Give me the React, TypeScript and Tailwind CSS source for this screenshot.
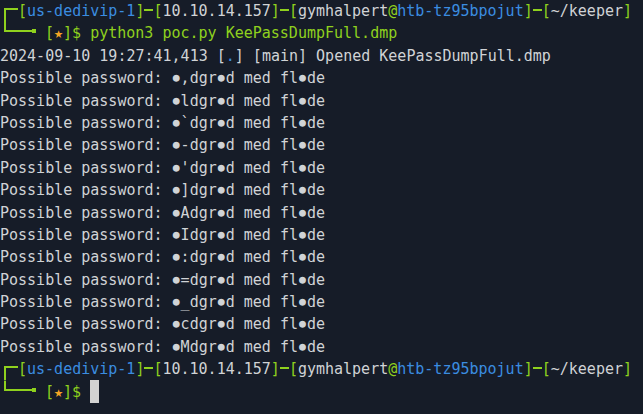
import React from "react";

const G = "text-[#8fd11e]";
const B = "text-[#3b8de0]";
const W = "text-[#d0d3d6]";

const candidates = [",", "l", "`", "-", "'", "]", "A", "I", ":", "=", "_", "c", "M"];

function TopCorner() {
  return (
    <svg width="18" height="22.4" className="shrink-0" viewBox="0 0 18 22.4">
      <rect x="4" y="8" width="2" height="14.4" fill="#8fd11e" />
      <rect x="4" y="8" width="14" height="2" fill="#8fd11e" />
    </svg>
  );
}

function BottomCorner() {
  return (
    <svg width="36" height="22.4" className="shrink-0" viewBox="0 0 36 22.4">
      <rect x="4" y="0" width="2" height="10" fill="#8fd11e" />
      <rect x="4" y="8" width="30" height="2" fill="#8fd11e" />
      <rect x="32" y="7" width="4" height="4" fill="#8fd11e" />
    </svg>
  );
}

function Dash() {
  return <span className="inline-block h-[2px] w-[9px] bg-[#8fd11e] translate-y-[-1px]" />;
}

// masked password char, drawn a bit smaller than the full-size glyph
function Dot() {
  return (
    <span className="inline-block w-[9.03px] -translate-y-[2px] text-center text-[11.5px] leading-none">●</span>
  );
}

function PromptTop() {
  return (
    <div className="flex h-[22.4px] items-center">
      <TopCorner />
      <span className={G}>[</span>
      <span className={B}>us-dedivip-1</span>
      <span className={G}>]</span>
      <Dash />
      <span className={G}>[</span>
      <span className={W}>10.10.14.157</span>
      <span className={G}>]</span>
      <Dash />
      <span className={G}>[</span>
      <span className={W}>gymhalpert</span>
      <span className={G}>@</span>
      <span className={B}>htb-tz95bpojut</span>
      <span className={G}>]</span>
      <Dash />
      <span className={G}>[</span>
      <span className={W}>~/keeper</span>
      <span className={G}>]</span>
    </div>
  );
}

function PromptBottom({ cmd, cursor }: { cmd?: string; cursor?: boolean }) {
  return (
    <div className="flex h-[22.4px] items-center whitespace-pre">
      <BottomCorner />
      <span> </span>
      <span className={G}>[</span>
      <span className="text-[#f5a524]">★</span>
      <span className={G}>]$ </span>
      {cmd && <span className={G}>{cmd}</span>}
      {cursor && <span className="inline-block h-[23px] w-[9px] bg-[#d2d2d2]" />}
    </div>
  );
}

export default function App() {
  return (
    <div
      className="h-[414px] w-[643px] overflow-hidden bg-[#161c28] text-[15px] leading-[22.4px] text-[#d0d3d6]"
      style={{ fontFamily: '"DejaVu Sans Mono", monospace' }}
    >
      <PromptTop />
      <PromptBottom cmd="python3 poc.py KeePassDumpFull.dmp" />
      <div className="whitespace-pre">
        2024-09-10 19:27:41,413 [<span className={B}>.</span>] [main] Opened KeePassDumpFull.dmp
      </div>
      {candidates.map((c, i) => (
        <div key={i} className="h-[22.4px] whitespace-pre">
          Possible password: <Dot />
          {c}dgr<Dot />d med fl<Dot />de
        </div>
      ))}
      <PromptTop />
      <PromptBottom cursor />
    </div>
  );
}
